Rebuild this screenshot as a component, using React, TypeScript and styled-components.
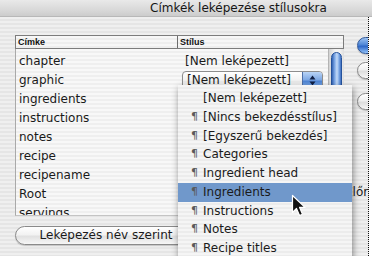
import React from 'react';
import styled, { createGlobalStyle } from 'styled-components';

const Global = createGlobalStyle`
  html, body { margin: 0; padding: 0; background: #fff; }
  body { font-family: "DejaVu Sans", "Noto Sans", sans-serif; color: #1a1a1a; }
  #root { width: 372px; height: 256px; }
`;

const pinstripe = (a: string, b: string) =>
  `repeating-linear-gradient(to bottom, ${a} 0px, ${a} 2px, ${b} 2px, ${b} 4px)`;

const Screen = styled.div`
  position: relative;
  width: 372px;
  height: 256px;
  overflow: hidden;
  background: #fff;
  display: flex;
  flex-direction: column;
`;

const TitleBar = styled.div`
  flex: none;
  height: 17px;
  box-sizing: border-box;
  padding-left: 150px;
  background: linear-gradient(to bottom, #e9e9e9, #d6d6d6 70%, #cccccc);
  border-bottom: 1px solid #b8b8b8;
  font-size: 12px;
  line-height: 16px;
  color: #151515;
  white-space: nowrap;
`;

const Body = styled.div`
  flex: 1;
  width: 369px;
  box-sizing: border-box;
  border-right: 1px dotted #111;
  background: ${pinstripe('#efefef', '#e5e5e5')};
  display: flex;
  overflow: hidden;
`;

const LeftCol = styled.div`
  flex: none;
  padding: 18px 0 0 15px;
  display: flex;
  flex-direction: column;
`;

const Table = styled.div`
  width: 329px;
  display: flex;
  flex-direction: column;
`;

const Header = styled.div`
  display: flex;
  height: 14px;
  box-sizing: border-box;
  border: 1px solid #7c7c7c;
  background: ${pinstripe('#f7f7f7', '#eeeeee')};
`;

const HeaderCell = styled.div<{ $w?: number; $divider?: boolean }>`
  ${(p) => (p.$w ? `width: ${p.$w}px; flex: none;` : 'flex: 1;')}
  box-sizing: border-box;
  padding-left: 2px;
  font-family: "Liberation Sans", Arial, sans-serif;
  font-weight: bold;
  font-size: 9px;
  line-height: 12px;
  color: #111;
  ${(p) => (p.$divider ? 'border-right: 1px solid #6c6c6c;' : '')}
`;

const TableBody = styled.div`
  display: flex;
  height: 167px;
`;

const Rows = styled.div`
  flex: 1;
  box-sizing: border-box;
  padding-top: 3px;
  border-left: 1px solid #a9a9a9;
  border-bottom: 1px solid #c4c4c4;
  background: ${pinstripe('#f8f8f8', '#efefef')};
  overflow: hidden;
`;

const Row = styled.div`
  display: flex;
  align-items: center;
  height: 19px;
  font-size: 12px;
  line-height: 19px;
  white-space: nowrap;
`;

const NameCell = styled.div`
  width: 162px;
  flex: none;
  padding-left: 3px;
  box-sizing: border-box;
`;

const StyleCell = styled.div`
  flex: 1;
  padding-left: 7px;
`;

const PopupCell = styled.div`
  flex: 1;
  padding-left: 4px;
`;

const Popup = styled.div`
  width: 141px;
  height: 19px;
  box-sizing: border-box;
  border: 1px solid #8d8d8d;
  border-radius: 4px;
  background: linear-gradient(to bottom, #ffffff, #f1f1f1 50%, #e8e8e8 51%, #fafafa);
  display: flex;
  align-items: center;
  padding-left: 4px;
  line-height: 17px;
  box-shadow: 0 1px 1px rgba(0, 0, 0, 0.15);
`;

const Stepper = styled.div`
  margin-left: auto;
  width: 19px;
  height: 17px;
  border-radius: 0 3px 3px 0;
  background: linear-gradient(to bottom, #b9d4f6, #7fa9e4 45%, #4f85d5 55%, #8fbaf0);
  border-left: 1px solid #4d6fa8;
  display: flex;
  align-items: center;
  justify-content: center;
`;

const ScrollTrack = styled.div`
  width: 16px;
  flex: none;
  box-sizing: border-box;
  padding: 3px 2px 0;
  background: linear-gradient(to right, #d2d2d2, #f3f3f3 40%, #f3f3f3 70%, #dedede);
  border-left: 1px solid #b4b4b4;
`;

const ScrollThumb = styled.div`
  height: 120px;
  border-radius: 6px;
  border: 1px solid #25529c;
  box-sizing: border-box;
  background: linear-gradient(to right, #3464b4, #7ea8e6 30%, #c4dbf8 55%, #86afe9 75%, #3e6fc0);
`;

const PillButton = styled.div`
  margin-top: 10px;
  width: 180px;
  height: 19px;
  box-sizing: border-box;
  border: 1px solid #8a8a8a;
  border-radius: 10px;
  background: linear-gradient(to bottom, #ffffff, #f2f2f2 45%, #e1e1e1 55%, #f6f6f6);
  box-shadow: 0 1px 1px rgba(0, 0, 0, 0.18);
  font-size: 12px;
  line-height: 17px;
  text-align: center;
  white-space: nowrap;
  padding-left: 2px;
`;

const RightCol = styled.div`
  flex: none;
  padding: 20px 0 0 1px;
  display: flex;
  flex-direction: column;
`;

const RoundButton = styled.div<{ $blue?: boolean; $gap: number }>`
  margin: ${(p) => p.$gap}px 0 0 12px;
  width: 30px;
  height: 17px;
  box-sizing: border-box;
  border-radius: 9px;
  border: 1px solid ${(p) => (p.$blue ? '#2f5697' : '#888')};
  background: ${(p) =>
    p.$blue
      ? 'linear-gradient(to bottom, #9cc2f2, #4f86d6 45%, #2e67c8 55%, #8fc0f6)'
      : 'linear-gradient(to bottom, #ffffff, #f0f0f0 45%, #dddddd 55%, #f7f7f7)'};
  box-shadow: 0 1px 1px rgba(0, 0, 0, 0.2);
`;

const SideLabel = styled.div`
  margin-top: 74px;
  font-size: 12px;
  line-height: 16px;
  white-space: nowrap;
`;

const Menu = styled.div`
  position: absolute;
  left: 178px;
  top: 85px;
  width: 174px;
  height: 185px;
  box-sizing: border-box;
  padding-top: 4px;
  background: ${pinstripe('#f5f5f5', '#ececec')};
  box-shadow: 1px 3px 7px rgba(0, 0, 0, 0.45);
`;

const MenuItem = styled.div<{ $active?: boolean }>`
  display: flex;
  height: 18.75px;
  line-height: 18.75px;
  padding-left: 13px;
  font-size: 12px;
  color: #1b1b1b;
  white-space: nowrap;
  background: ${(p) => (p.$active ? '#7098cb' : 'transparent')};
`;

const Pilcrow = styled.span`
  width: 12px;
  flex: none;
  color: #5a5a5a;
  font-size: 11px;
`;

const Cursor = styled.svg`
  position: absolute;
  left: 291px;
  top: 194px;
`;

const tags = ['chapter', 'graphic', 'ingredients', 'instructions', 'notes', 'recipe', 'recipename', 'Root', 'servings'];

const menuItems: { label: string; para: boolean; active?: boolean }[] = [
  { label: '[Nem leképezett]', para: false },
  { label: '[Nincs bekezdésstílus]', para: true },
  { label: '[Egyszerű bekezdés]', para: true },
  { label: 'Categories', para: true },
  { label: 'Ingredient head', para: true },
  { label: 'Ingredients', para: true, active: true },
  { label: 'Instructions', para: true },
  { label: 'Notes', para: true },
  { label: 'Recipe titles', para: true },
];

export default function App() {
  return (
    <>
      <Global />
      <Screen>
        <TitleBar>Címkék leképezése stílusokra</TitleBar>
        <Body>
          <LeftCol>
            <Table>
              <Header>
                <HeaderCell $w={162} $divider>Címke</HeaderCell>
                <HeaderCell>Stílus</HeaderCell>
              </Header>
              <TableBody>
                <Rows>
                  {tags.map((t, i) => (
                    <Row key={t}>
                      <NameCell>{t}</NameCell>
                      {i === 0 && <StyleCell>[Nem leképezett]</StyleCell>}
                      {i === 1 && (
                        <PopupCell>
                          <Popup>
                            [Nem leképezett]
                            <Stepper>
                              <svg width="7" height="11" viewBox="0 0 7 11">
                                <path d="M3.5 0.5 L6.5 4.5 L0.5 4.5 Z" fill="#0f1f44" />
                                <path d="M3.5 10.5 L6.5 6.5 L0.5 6.5 Z" fill="#0f1f44" />
                              </svg>
                            </Stepper>
                          </Popup>
                        </PopupCell>
                      )}
                    </Row>
                  ))}
                </Rows>
                <ScrollTrack>
                  <ScrollThumb />
                </ScrollTrack>
              </TableBody>
            </Table>
            <PillButton>Leképezés név szerint</PillButton>
          </LeftCol>
          <RightCol>
            <RoundButton $blue $gap={0} />
            <RoundButton $gap={8} />
            <RoundButton $gap={14} />
            <SideLabel>Előnézet</SideLabel>
          </RightCol>
        </Body>
        <Menu>
          {menuItems.map((m) => (
            <MenuItem key={m.label} $active={m.active}>
              <Pilcrow>{m.para ? '¶' : ''}</Pilcrow>
              {m.label}
            </MenuItem>
          ))}
        </Menu>
        <Cursor width="16" height="24" viewBox="0 0 16 24">
          <path
            d="M1.5 1.5 L1.5 18.5 L5.5 14.5 L8.5 21.5 L11.5 20.2 L8.6 13.4 L14 13.4 Z"
            fill="#111"
            stroke="#fff"
            strokeWidth="1.2"
            strokeLinejoin="round"
          />
        </Cursor>
      </Screen>
    </>
  );
}
